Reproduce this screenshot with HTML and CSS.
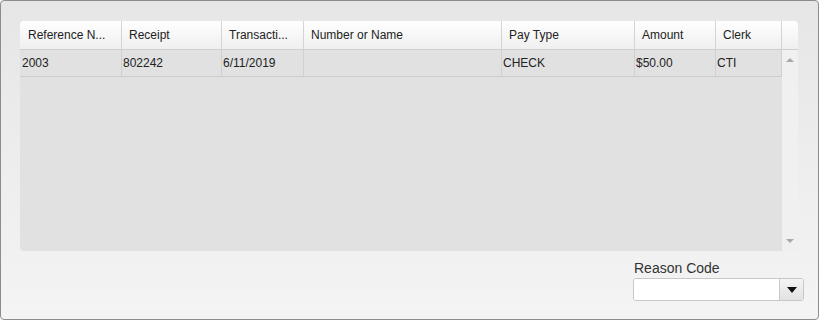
FILE: index.html
```html
<!DOCTYPE html>
<html>
<head>
<meta charset="utf-8">
<link rel="stylesheet" href="styles.css">
</head>
<body>
<div class="panel">
  <div class="grid">
    <div class="head">
      <div class="hc c1">Reference N...</div>
      <div class="hc c2">Receipt</div>
      <div class="hc c3">Transacti...</div>
      <div class="hc c4">Number or Name</div>
      <div class="hc c5">Pay Type</div>
      <div class="hc c6">Amount</div>
      <div class="hc c7">Clerk</div>
      <div class="hc c8"></div>
    </div>
    <div class="body">
      <div class="rows">
        <div class="row">
          <div class="dc c1">2003</div>
          <div class="dc c2">802242</div>
          <div class="dc c3">6/11/2019</div>
          <div class="dc c4"></div>
          <div class="dc c5">CHECK</div>
          <div class="dc c6">$50.00</div>
          <div class="dc c7">CTI</div>
        </div>
      </div>
      <div class="scroll">
        <span class="arrow up"></span>
        <span class="arrow down"></span>
      </div>
    </div>
  </div>
  <div class="footer">
    <div class="field">
      <div class="label">Reason Code</div>
      <div class="select">
        <div class="value"></div>
        <div class="btn"><span class="tri"></span></div>
      </div>
    </div>
  </div>
</div>
</body>
</html>
```
FILE: styles.css
```css
html, body {
  margin: 0;
  padding: 0;
  background: #ffffff;
}
.panel {
  box-sizing: border-box;
  width: 819px;
  height: 320px;
  border: 1px solid #8c8c8c;
  border-radius: 4px;
  background: linear-gradient(#e6e6e6, #f4f4f4);
  padding: 20px 20px 0 19px;
  font-family: "Liberation Sans", Arial, sans-serif;
  font-size: 12px;
  color: #222;
  display: flex;
  flex-direction: column;
}
.grid {
  width: 778px;
  height: 230px;
  border-radius: 4px;
  overflow: hidden;
  background: #e1e1e1;
  display: flex;
  flex-direction: column;
}
.head {
  display: flex;
  height: 28px;
  border-bottom: 1px solid #cfcfcf;
  background: linear-gradient(#ffffff, #efefef);
}
.hc {
  box-sizing: border-box;
  border-right: 1px solid #d4d4d4;
  padding-left: 7px;
  line-height: 29px;
  white-space: nowrap;
  overflow: hidden;
}
.hc.c1 { padding-left: 8px; }
.c1 { width: 102px; }
.c2 { width: 100px; }
.c3 { width: 82px; }
.c4 { width: 198px; }
.c5 { width: 133px; }
.c6 { width: 81px; }
.c7 { width: 66px; }
.c8 { width: 16px; border-right: none; }
.body {
  flex: 1;
  display: flex;
}
.rows {
  width: 762px;
}
.row {
  display: flex;
  height: 26px;
  border-bottom: 1px solid #cdcdcd;
  background: #e1e1e1;
}
.dc {
  box-sizing: border-box;
  border-right: 1px solid #d0d0d0;
  padding-left: 1px;
  line-height: 27px;
  white-space: nowrap;
}
.dc.c1 { padding-left: 2px; }
.scroll {
  width: 16px;
  background: #f0f0f0;
  display: flex;
  flex-direction: column;
  justify-content: space-between;
  align-items: center;
  padding: 8px 0 8px;
  box-sizing: border-box;
}
.arrow {
  width: 0;
  height: 0;
  border-left: 4px solid transparent;
  border-right: 4px solid transparent;
}
.arrow.up { border-bottom: 4px solid #a8a8a8; }
.arrow.down { border-top: 4px solid #a8a8a8; }
.footer {
  display: flex;
  justify-content: flex-end;
  margin-right: -6px;
  margin-top: 9px;
}
.field {
  width: 171px;
}
.label {
  font-size: 14px;
  color: #333;
  line-height: 16px;
  margin-bottom: 2px;
  padding-left: 1px;
}
.select {
  box-sizing: border-box;
  height: 23px;
  border: 1px solid #c8c8c8;
  border-radius: 3px;
  display: flex;
  overflow: hidden;
  background: #fff;
}
.value {
  flex: 1;
  background: #fff;
}
.btn {
  width: 23px;
  border-left: 1px solid #c8c8c8;
  background: linear-gradient(#f4f4f4, #e2e2e2);
  display: flex;
  align-items: center;
  justify-content: center;
}
.tri {
  width: 0;
  height: 0;
  border-left: 5px solid transparent;
  border-right: 5px solid transparent;
  border-top: 6px solid #111;
}
```
